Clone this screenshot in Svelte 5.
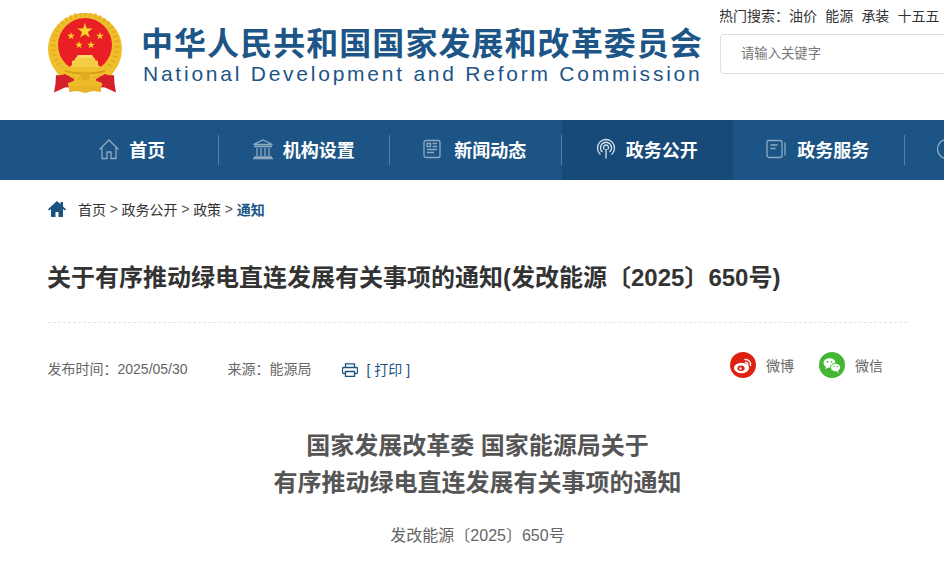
<script>
  const hotWords = ["油价", "能源", "承装", "十五五"];
  const navItems = [
    { label: "首页", icon: "home" },
    { label: "机构设置", icon: "bank" },
    { label: "新闻动态", icon: "news" },
    { label: "政务公开", icon: "signal", active: true },
    { label: "政务服务", icon: "book" },
    { label: "", icon: "circle" }
  ];

  // five pointed star, used for the emblem
  const star = (cx, cy, r) => {
    const pts = [];
    for (let i = 0; i < 10; i++) {
      const rad = i % 2 ? r * 0.4 : r;
      const a = (Math.PI / 5) * i - Math.PI / 2;
      pts.push(`${(cx + rad * Math.cos(a)).toFixed(1)},${(cy + rad * Math.sin(a)).toFixed(1)}`);
    }
    return pts.join(" ");
  };

  const stars = [
    [37, 18, 8],
    [23, 23, 4],
    [52, 23, 4],
    [31, 32, 4],
    [43, 32, 4]
  ];
</script>

<div class="page">
  <header class="top">
    <div class="brand">
      <svg class="emblem" viewBox="0 0 74 80" width="74" height="80" aria-hidden="true">
        <path d="M37 0a37 36 0 0 1 30 57L58 70H16L7 57A37 36 0 0 1 37 0z" fill="#f0c02c" />
        <circle cx="37" cy="33" r="32" fill="none" stroke="#dfa31e" stroke-width="5" stroke-dasharray="2 3" opacity=".6" />
        <circle cx="37" cy="32" r="27" fill="#ea1f26" />
        {#each stars as [x, y, r]}
          <polygon points={star(x, y, r)} fill="#f8d52a" />
        {/each}
        <path d="M27 45h20v2l3 1v4l4 3H20l4-3v-4l3-1z" fill="#f3cd46" />
        <path d="M30 42h14l2 3H28z" fill="#f8dc68" />
        <path d="M10 54h54l-2 6q-25 7-50 0z" fill="#f0c02c" />
        <path d="M17 57q20 5 40 0v2q-20 5-40 0z" fill="#d99d1c" />
        <path d="M8 62q5 1 9-1l9 5v8l-9 .5-11 5q2-9 2-17.500zM66 62q-5 1-9-1l-9 5v8l9 .5 11 5q-2-9-2-17.500z" fill="#d4202a" />
        <circle cx="37" cy="63" r="4.500" fill="#e2aa22" />
        <path d="M20 70q8-4 17-3 9-1 17 3v3H20z" fill="#edbb2a" />
        <path d="M21 73h32v6l-8-1-8 2-8-2-8 1z" fill="#e8b327" />
      </svg>
      <div class="brand-text">
        <div class="cn">中华人民共和国国家发展和改革委员会</div>
        <div class="en">National Development and Reform Commission</div>
      </div>
    </div>
    <div class="search">
      <div class="hot">
        <span>热门搜索：</span>
        {#each hotWords as word}
          <a href="#top">{word}</a>
        {/each}
      </div>
      <div class="search-box">请输入关键字</div>
    </div>
  </header>

  <nav class="nav">
    {#each navItems as item}
      <div class="nav-item" class:active={item.active} class:blank={!item.label}>
        <svg class="nav-icon" viewBox="0 0 24 24" width="24" height="24" aria-hidden="true">
          {#if item.icon === "home"}
            <path d="M2.500 12.500 12 3l9.500 9.500M5 10.500V21.500h5V15h4v6.500h5V10.500" />
          {:else if item.icon === "bank"}
            <path d="M2.500 7.500 12 3l9.500 4.500zM3 9.500h18M6 11v8M10 11v8M14 11v8M18 11v8M3 20h18M2 21.500h20" />
          {:else if item.icon === "news"}
            <rect x="2" y="3.500" width="16" height="17" rx="2" />
            <path d="M5 6.500h3.500v3H5zM10.500 6.500H15M10.500 9.500H15M5 12.500h10M5 15.500h7" />
          {:else if item.icon === "signal"}
            <path class="bright" d="M6.500 17.500a8.500 8.500 0 1 1 11 0M8.500 15a5.500 5.500 0 1 1 7 0M10.500 12.500a2.500 2.500 0 1 1 3 0M12 12v9.500" />
          {:else if item.icon === "book"}
            <rect x="2" y="3.500" width="15" height="17" rx="2" />
            <path d="M5.500 8h7M5.500 11.500h5M20 5.500v13" />
          {:else}
            <circle cx="10" cy="12" r="9.500" />
          {/if}
        </svg>
        <span>{item.label}</span>
      </div>
    {/each}
  </nav>

  <main class="main">
    <div class="crumbs">
      <svg viewBox="0 0 18 16" width="18" height="16" aria-hidden="true">
        <path d="M9 0 0 8.200l1.200 1.300L3 8v8h4.500v-5h3v5H15V8l1.800 1.500L18 8.200l-3-2.700V1h-2.500v2.200z" fill="#1c527f" />
      </svg>
      <span>首页</span><i>&gt;</i><span>政务公开</span><i>&gt;</i><span>政策</span><i>&gt;</i><b>通知</b>
    </div>

    <h1><span>关于有序推动绿电直连发展有关事项的通知(发改能源〔2025〕650号)</span></h1>

    <div class="meta">
      <span class="date">发布时间：2025/05/30</span>
      <span class="source">来源：能源局</span>
      <svg class="printer" viewBox="0 0 16 14" width="16" height="14" aria-hidden="true">
        <path d="M3.500 4.500V.8h9v3.700M3.500 10.500h-2a1 1 0 0 1-1-1V5.500a1 1 0 0 1 1-1h13a1 1 0 0 1 1 1v4a1 1 0 0 1-1 1h-2M3.500 8.500h9v5h-9z" fill="none" stroke="#1c527f" stroke-width="1.300" />
      </svg>
      <span class="print">[ 打印 ]</span>
      <div class="share">
        <span class="share-item">
          <span class="disc weibo">
            <svg viewBox="0 0 26 26" width="26" height="26" aria-hidden="true">
              <ellipse cx="11.500" cy="16" rx="7.500" ry="5.200" fill="#fff" />
              <ellipse cx="11" cy="16.300" rx="3.600" ry="2.700" fill="#dd2211" />
              <circle cx="10.500" cy="16.500" r="1.200" fill="#fff" />
              <path d="M15 7.500a5 5 0 0 1 5.500 6M15.500 10.500a2.200 2.200 0 0 1 2.300 2.800" fill="none" stroke="#fff" stroke-width="1.400" stroke-linecap="round" />
            </svg>
          </span>
          微博
        </span>
        <span class="share-item">
          <span class="disc wechat">
            <svg viewBox="0 0 26 26" width="26" height="26" aria-hidden="true">
              <ellipse cx="10.500" cy="11" rx="6" ry="4.800" fill="#fff" />
              <path d="m7 14.500-.8 2.700 3-1.700z" fill="#fff" />
              <ellipse cx="16.500" cy="15.500" rx="5" ry="4.200" stroke="#44b634" stroke-width="1" fill="#fff" />
              <path d="m19 18.800.7 2-2.400-1.300z" fill="#fff" />
              <circle cx="8.500" cy="9.800" r=".9" fill="#44b634" />
              <circle cx="12.500" cy="9.800" r=".9" fill="#44b634" />
              <circle cx="15" cy="14.500" r=".7" fill="#44b634" />
              <circle cx="18.200" cy="14.500" r=".7" fill="#44b634" />
            </svg>
          </span>
          微信
        </span>
      </div>
    </div>

    <h2>国家发展改革委 国家能源局关于<br />有序推动绿电直连发展有关事项的通知</h2>
    <p class="docno">发改能源〔2025〕650号</p>
  </main>
</div>

<style>
  :global(body) {
    margin: 0;
    overflow: hidden;
    background: #fff;
  }

  .page {
    width: 944px;
    height: 569px;
    overflow: hidden;
    font-family: "Liberation Sans", "Noto Sans CJK SC", sans-serif;
    color: #333;
  }

  .top {
    display: flex;
    justify-content: space-between;
    height: 120px;
    padding-left: 48px;
    box-sizing: border-box;
  }

  .brand {
    display: flex;
    padding-top: 13px;
  }

  .emblem {
    flex: none;
  }

  .brand-text {
    margin-left: 19px;
    color: #1c5586;
  }

  .cn {
    margin-top: 12px;
    font-size: 32px;
    line-height: 38px;
    font-weight: 700;
    letter-spacing: 1.05px;
    white-space: nowrap;
  }

  .en {
    font-size: 21px;
    line-height: 21px;
    letter-spacing: 2.76px;
    white-space: nowrap;
    margin-left: 2px;
  }

  .search {
    flex: none;
    width: 224px;
    padding-top: 8px;
    overflow: hidden;
  }

  .hot {
    display: flex;
    margin-left: -1px;
    font-size: 14px;
    line-height: 17px;
    white-space: nowrap;
    color: #333;
  }

  .hot a {
    margin-right: 8.200px;
    color: #333;
    text-decoration: none;
  }

  .search-box {
    width: 300px;
    height: 40px;
    margin-top: 9px;
    padding-left: 20px;
    box-sizing: border-box;
    border: 1px solid #ddd;
    border-radius: 4px;
    font-size: 13.333px;
    line-height: 38px;
    color: #777;
  }

  .nav {
    display: flex;
    height: 60px;
    padding-left: 47px;
    background: #1c5485;
    overflow: hidden;
  }

  .nav-item {
    position: relative;
    flex: 0 0 171.500px;
    box-sizing: border-box;
    display: flex;
    align-items: center;
    justify-content: center;
    gap: 8px;
    padding: 0 3px 2px 0;
    font-size: 18px;
    font-weight: 700;
    color: #fff;
    white-space: nowrap;
  }

  .nav-item.blank span {
    width: 72px;
  }

  .nav-item::after {
    content: "";
    position: absolute;
    right: 0;
    top: 15px;
    height: 30px;
    width: 1px;
    background: rgba(255, 255, 255, 0.25);
  }

  .nav-item.active {
    background: #174a78;
  }

  .nav-item.active::after {
    display: none;
  }

  .nav-icon {
    fill: none;
    stroke: rgba(255, 255, 255, 0.5);
    stroke-width: 1.300;
  }

  .nav-icon .bright {
    stroke: rgba(255, 255, 255, 0.85);
  }

  .main {
    padding: 0 37px 0 48px;
  }

  .crumbs {
    display: flex;
    align-items: center;
    height: 58px;
    margin-bottom: 25px;
    font-size: 14px;
    color: #333;
  }

  .crumbs svg {
    margin-right: 12px;
  }

  .crumbs i {
    margin: 0 3.700px;
    font-style: normal;
    color: #555;
  }

  .crumbs b {
    color: #1c5485;
  }

  h1 {
    margin: 0;
    padding-bottom: 29px;
    border-bottom: 1px dashed #e4e4e4;
    font-size: 24px;
    line-height: 30px;
    font-weight: 700;
    white-space: nowrap;
    color: #333;
  }

  h1 span {
    margin-left: -1px;
  }

  .meta {
    display: flex;
    align-items: center;
    height: 30px;
    margin-top: 30px;
    font-size: 14px;
    color: #666;
  }

  .date {
    margin-left: -0.500px;
  }

  .source {
    margin-left: 40px;
  }

  .printer {
    margin-left: 30px;
    margin-top: 4px;
  }

  .print {
    margin: 2px 0 0 9px;
    color: #1c5485;
  }

  .share {
    display: flex;
    align-self: flex-start;
    gap: 25px;
    margin-top: -1px;
    margin-left: auto;
    padding-right: 24px;
  }

  .share-item {
    display: flex;
    align-items: center;
    gap: 10px;
  }

  .disc {
    display: block;
    width: 26px;
    height: 26px;
    border-radius: 50%;
  }

  .disc svg {
    display: block;
  }

  .weibo {
    background: #dd2211;
  }

  .wechat {
    background: #44b634;
  }

  h2 {
    margin: 44px 0 0;
    font-size: 24px;
    line-height: 37px;
    font-weight: 700;
    text-align: center;
    color: #555;
  }

  .docno {
    margin: 23px 0 0;
    font-size: 16px;
    line-height: 24px;
    text-align: center;
    color: #666;
  }
</style>
